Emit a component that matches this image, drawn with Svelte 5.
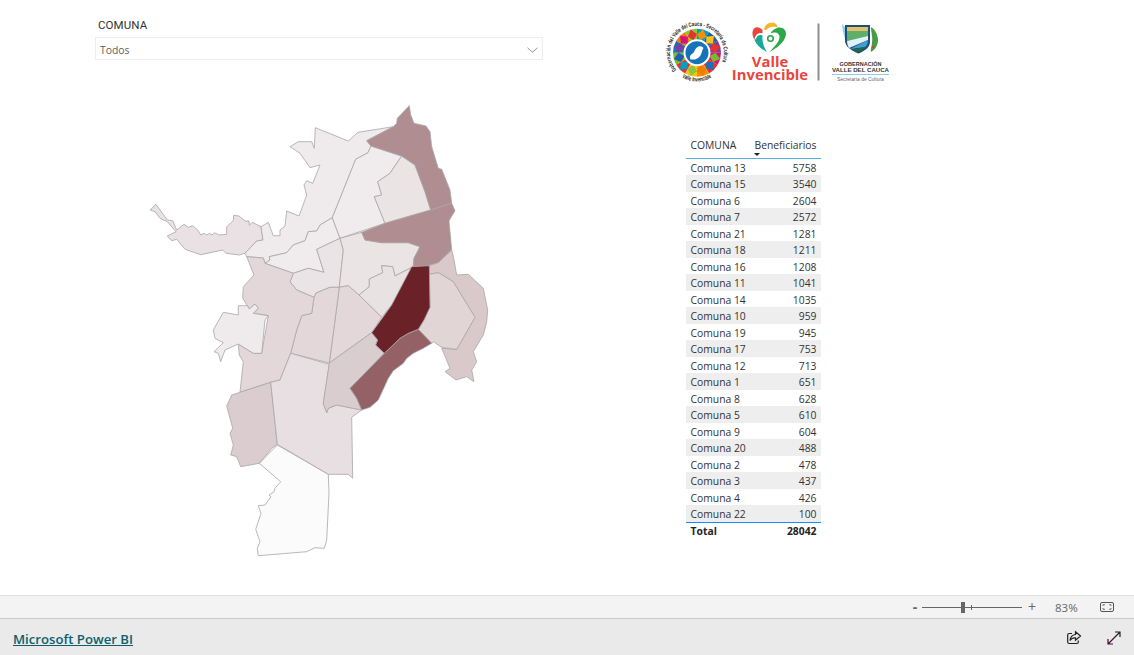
<script lang="ts">
    const rows = [
        ["Comuna 13", 5758], ["Comuna 15", 3540], ["Comuna 6", 2604], ["Comuna 7", 2572],
        ["Comuna 21", 1281], ["Comuna 18", 1211], ["Comuna 16", 1208], ["Comuna 11", 1041],
        ["Comuna 14", 1035], ["Comuna 10", 959], ["Comuna 19", 945], ["Comuna 17", 753],
        ["Comuna 12", 713], ["Comuna 1", 651], ["Comuna 8", 628], ["Comuna 5", 610],
        ["Comuna 9", 604], ["Comuna 20", 488], ["Comuna 2", 478], ["Comuna 3", 437],
        ["Comuna 4", 426], ["Comuna 22", 100],
    ];

    // map regions, traced in page pixels
    const regions = [
        { fill: "#fbfbfb", pts: "277.3,445 328.3,474.3 329,493.3 326.7,540 324.3,548.3 315,547.7 306.7,551.7 258.3,555.7 257.3,548.3 260,541.7 255.7,529.3 261,513.3 258.3,505.7 265,505 271,496.7 269,495 274,491.7 275,488.3 280.7,481.7 259.3,463.3" },
        { fill: "#e9e1e3", pts: "150,210 156,204.3 167.3,220 172.7,220.7 176.7,230 184,224.3 188.3,227.3 192.7,225.7 198.3,230.7 200.7,235 204,233.3 206.7,235 209.3,233.3 212,235 214.3,232.7 219.3,235 226.7,234.3 226.7,226.7 233.3,220.7 233.7,215.3 239,216 245,221 249,221 249.3,225.3 252.3,222.3 261,226.7 263,240 256.7,241 245,253.3 239.3,255 226,253.3 222.7,250 200.7,254.7 185,249.3 176.7,239.3 171.7,240.7 167.3,236 176,231.7 167.3,221.7 160,218.3 155,211.7" },
        { fill: "#efebec", pts: "290,146.7 298,141.7 311.7,141.7 314.3,148.3 315.3,127.7 348.3,141 358,132.3 393.3,126.7 366.7,140.7 371,146 368,152.7 355.7,159.3 332.3,217.7 320,225 316.7,231 308.3,231.7 305,240.7 293.3,245 286.7,252.7 269.3,256.7 270,260 265,263.3 263.3,258 246.7,256.7 245,253.3 256.7,241 263,240 261,226.7 268.3,222.3 273.3,235.7 280,235.7 280,230 285,226 286.7,211 299,216 306.7,195 304,185 306.7,180.7 312.7,183.3 320,165 310,167.7 300,153.3" },
        { fill: "#f0ebec", pts: "320,225 332.3,217.7 340,238.3 316.7,249.3 324,272.3 308.3,268.3 293.3,273.3 265,263.3 270,260 269.3,256.7 286.7,252.7 293.3,245 305,240.7 308.3,231.7 316.7,231" },
        { fill: "#f0ecee", pts: "371,146 401.7,156 390,173.3 377.7,181.7 381.7,195 374.3,196.7 385,223.3 340,238.3 332.3,217.7 355.7,159.3 368,152.7" },
        { fill: "#ebe4e5", pts: "401.7,156 415,165 425,191.7 430.7,210 385,223.3 374.3,196.7 381.7,195 377.7,181.7 390,173.3" },
        { fill: "#ebe4e6", pts: "340,238.3 343.3,250 339.3,287.3 330,287.3 316,293 314,297.3 296.7,290 290,281.7 293.3,273.3 308.3,268.3 324,272.3 316.7,249.3" },
        { fill: "#ebe4e5", pts: "340,238.3 361.7,232.3 365,240 381.7,242.7 408.3,242.7 420,246.7 414,258.3 413,266.7 395,276 392.7,266.7 381.7,265.7 382.7,272.7 369.3,279 369.3,286.7 359,295 348.3,285.7 339.3,287.3 343.3,250" },
        { fill: "#e9e2e3", pts: "413,266.7 395,276 392.7,266.7 381.7,265.7 382.7,272.7 369.3,279 369.3,286.7 359,295 381.7,317.3 391.7,305" },
        { fill: "#b08d91", pts: "366.7,140.7 393.3,126.7 396.7,123.3 397.3,118.3 409.3,105.7 410.7,115 414,123.3 426,126 430,131.7 431.7,146.7 438.3,168.3 441.7,169.3 450,190 451.7,203.3 430.7,210 425,191.7 415,165 401.7,156 371,146" },
        { fill: "#b08d91", pts: "361.7,232.3 385,223.3 430.7,210 451.7,203.3 455,210.7 449,220.7 451.7,250 438.3,262.7 423.3,266.7 413.3,266.7 414,258.3 420,246.7 408.3,242.7 381.7,242.7 365,240" },
        { fill: "#d9c9cb", pts: "429.3,265.7 438.3,262.7 451.7,250 454,260 456.7,275 468.3,274.3 483.3,288.3 487.7,310 486.7,322 483.3,335 473.3,351.7 476.7,361.7 471.7,370 474,381.7 466.7,376.7 456,380 445,371.7 450,368.3 441.7,348.3 456.7,349.3 475,317.3 453.3,281.7 438.3,272.7 429.3,274.3" },
        { fill: "#e2d5d6", pts: "429.3,274.3 438.3,272.7 453.3,281.7 475,317.3 456.7,349.3 441.7,347.3 433.3,341.7 431.7,343.3 418.3,329.3 424,320 430,307.3" },
        { fill: "#e3d7d9", pts: "339.3,287.3 348.3,285.7 359,295 381.7,317.3 371.7,332.7 329.3,363 335,320" },
        { fill: "#e3d7d9", pts: "339.3,287.3 335,320 329.3,363 290.7,353.3 296.7,330 301.7,315.7 311.7,313.3 314,297.3 316,293 330,287.3" },
        { fill: "#e3d7d9", pts: "246.7,256.7 263.3,258 265,263.3 293.3,273.3 290,281.7 296.7,290 314,297.3 311.7,313.3 301.7,315.7 296.7,330 290.7,353.3 280,380 270.7,382.3 240,392.3 243.3,361.7 239.3,355 238.3,344 253.3,353.3 261.7,353.3 268.3,315.7 253.3,313.3 258.3,308.3 255,304 249.3,309 247.3,305.7 242.7,298.3 243.3,286.7 254,275" },
        { fill: "#efebec", pts: "213.3,330 223.3,312.3 238.3,315 238.3,305.7 247.3,305.7 249.3,309 255,304 258.3,308.3 253.3,313.3 268.3,315.7 265,320 261.7,353.3 253.3,353.3 238.3,344 225,350 220.7,361.7 218.3,353.3 214,351.7 223.3,342.7 215,338.3" },
        { fill: "#dacccf", pts: "240,392.3 270.7,382.3 277.3,444.3 271.7,448.3 259.3,463.3 240.7,466.7 236.7,456.7 230.7,455 233.3,445 230,433.3 232.7,428.3 226.7,406 231.7,395" },
        { fill: "#e7dfe1", pts: "290.7,353.3 329.3,364.3 323.3,403.3 326.7,412.7 328.3,408.3 336.7,405 361.7,410 351.7,417.3 352.7,478.3 348.3,474.3 328.3,474.3 277.3,444.3 270.7,382.3 280,380" },
        { fill: "#dacdcf", pts: "371.7,332.7 377.7,340 375.7,345 384.3,353.3 350,388.3 356.7,398.3 361.7,410 336.7,405 328.3,408.3 326.7,412.7 323.3,403.3 329.3,363" },
        { fill: "#946166", pts: "418.3,329.3 431.7,343.3 423.3,348.3 413.3,353.3 406.7,358.3 403.3,363.3 393.3,370.7 388.3,378.3 378.3,400 370,407.3 361.7,410 356.7,398.3 350,388.3 384.3,353.3 400,338.3 408.3,333.3" },
        { fill: "#6a2127", pts: "411.7,266.7 429.3,265.7 430,307.3 424,320 418.3,329.3 408.3,333.3 400,338.3 384.3,353.3 375.7,345 377.7,340 371.7,332.7 391.7,305" },
    ];

    // rainbow mosaic of the round seal, colours run clockwise from 3 o'clock
    const colors = ["#d6127c", "#e8322d", "#f39200", "#ffc20e", "#e8322d", "#7ab929", "#1d70b8", "#ef7d00", "#8cc63f", "#00a0c6", "#1d5fae", "#7a3f98"];
    const xy = (r: number, a: number) => `${(r * Math.cos(a)).toFixed(2)} ${(r * Math.sin(a)).toFixed(2)}`;
    const step = (Math.PI * 2) / colors.length;
    const tiles = colors.map((c, i) => {
        const a = i * step;
        return {
            wedge: `M0 0L${xy(24, a)}A24 24 0 0 1 ${xy(24, a + step)}Z`,
            kite: `M${xy(13, a + step / 2)}L${xy(18.5, a)}L${xy(24, a + step / 2)}L${xy(18.5, a + step)}Z`,
            c,
            c2: colors[(i + 5) % colors.length],
        };
    });
</script>

<div class="page">
    <main class="report">
        <section class="left">
            <div class="slicer">
                <div class="slicer-title">COMUNA</div>
                <div class="slicer-box">
                    <span>Todos</span>
                    <svg width="11" height="6" viewBox="0 0 11 6"><path d="M.5.8l5 4.400 5-4.400" fill="none" stroke="#8a8a8a" stroke-width=".9" /></svg>
                </div>
            </div>
            <svg class="map" width="360" height="460" viewBox="140 100 360 460">
                {#each regions as r}
                    <polygon points={r.pts} fill={r.fill} stroke="#aaa6a7" stroke-width="0.8" stroke-linejoin="round" />
                {/each}
            </svg>
        </section>

        <section class="right">
            <svg class="logos" width="240" height="70" viewBox="660 18 240 70">
                <!-- round seal -->
                <g transform="translate(697 52.700)">
                    {#each tiles as t}
                        <path d={t.wedge} fill={t.c} />
                    {/each}
                    {#each tiles as t}
                        <path d={t.kite} fill={t.c2} />
                    {/each}
                    <circle r="13.500" fill="#fff" />
                    <circle r="11.500" fill="#1573b9" />
                    <path d="M-6.500 6.500c-1.500-3 .5-5 2.500-6 2-2 2-5 5-6.500 2.500-1 5 0 5.500 1.500-1 1-1.500 3-2 5-1 3-3 5-6 6-2 .5-4 .5-5 0z" fill="#fff" />
                    <path id="seal-top" d="M-20.600 17.300A26.900 26.900 0 1 1 20.600 17.300" fill="none" />
                    <path id="seal-bottom" d="M-15 24.500A28.700 28.700 0 0 0 15 24.500" fill="none" />
                    <text class="seal-text"><textPath href="#seal-top" textLength="112" lengthAdjust="spacingAndGlyphs">Gobernación del Valle del Cauca - Secretaría de Cultura</textPath></text>
                    <text class="seal-text"><textPath href="#seal-bottom" textLength="31" lengthAdjust="spacingAndGlyphs">Valle Invencible</textPath></text>
                </g>
                <!-- valle invencible -->
                <path d="M762.500 30C758 25 752 27 752.500 34c.2 2 .8 3.500 2 6 .5-5 3-7.500 8-7z" fill="#e8453c" />
                <path d="M754.500 40c2 5 7 9.500 12.500 12-3-4-5-10-4.500-16.500-3-1-5.500 0-6 2.500z" fill="#17a89a" />
                <path d="M764 29.500c.5-4 4-7 8-7 3.500 0 5.500 2.500 5.500 5-4-1.500-8.500-.5-11 2.500z" fill="#f7b52c" />
                <path d="M769.500 52c7-3.500 15.500-10 16.500-17.500.5-5-4-8-9-6.500-3 1-5.500 3-6.500 5.500 4-2 9-1 9 3.500 0 5.500-6 10-10 15z" fill="#2ba84a" />
                <circle cx="770.500" cy="38.500" r="2.800" fill="none" stroke="#2ba84a" stroke-width="1.600" />
                <text class="valle" x="770" y="66.500">Valle</text>
                <text class="valle" x="770" y="80">Invencible</text>
                <rect x="817.500" y="23.500" width="2" height="57" fill="#8d8f8e" />
                <!-- coat of arms -->
                <path d="M842 24c1 10 3 20 13 28l3 2-2-4c-7-6-10-14-11-23z" fill="#8fd0ea" />
                <path d="M845 25h25v17c0 5-5 9-11.500 11.500C851 50 845 47 845 40z" fill="#1e4f7a" />
                <path d="M847 27h21v4h-21z" fill="#e3c069" />
                <path d="M847 31h21v6l-21 4z" fill="#5fae6a" />
                <path d="M847 41l21-5v4l-19 8c-1-2-2-4-2-7z" fill="#dff2f8" />
                <path d="M850 49l18-9c0 3-1 5-3 7z" fill="#3f9fd0" />
                <path d="M852 50l13-3c-2 2-4 4-6.500 5-2.500-.5-5-1-6.500-2z" fill="#1f6b3f" />
                <path d="M871 27c4 2 7 8 7 13s-3 10-7 12c-1-3 1-6 1-9 1-5-1-11-1-16z" fill="#4a9a47" />
                <circle cx="873" cy="47" r="1" fill="#d33" />
                <text class="gob" x="860.500" y="65.500">GOBERNACIÓN</text>
                <text class="gob big" x="860.500" y="71.700">VALLE DEL CAUCA</text>
                <rect x="832" y="74" width="57" height="1" fill="#8cc8e8" />
                <text class="sec" x="860.500" y="80.500">Secretaría de Cultura</text>
            </svg>

            <div class="table">
                <div class="thead">
                    <span>COMUNA</span>
                    <span class="sorted">Beneficiarios<i class="arrow"></i></span>
                </div>
                {#each rows as [name, value]}
                    <div class="row">
                        <span>{name}</span>
                        <span>{value}</span>
                    </div>
                {/each}
                <div class="total">
                    <span>Total</span>
                    <span>28042</span>
                </div>
            </div>
        </section>
    </main>

    <div class="statusbar">
        <span class="zoom-btn minus">-</span>
        <span class="slider"><i class="mark"></i><i class="thumb"></i></span>
        <span class="zoom-btn plus">+</span>
        <span class="pct">83%</span>
        <svg class="fit" width="16" height="12" viewBox="0 0 16 12" fill="none" stroke="#555">
            <rect x="1.500" y="1.500" width="13" height="9" rx="1.500" />
            <path d="M4 5V3.700h2M12 5V3.700h-2M4 7v1.300h2M12 7v1.300h-2" stroke-width=".8" />
        </svg>
    </div>

    <footer class="footer">
        <a href="#top">Microsoft Power BI</a>
        <div class="actions">
            <svg width="16" height="16" viewBox="0 0 16 16" fill="none" stroke="#222" stroke-width="1.200">
                <path d="M6 3.500H3.200c-.9 0-1.500.6-1.500 1.500v7c0 .9.6 1.500 1.500 1.500h7.600c.9 0 1.500-.6 1.500-1.500v-1.500" />
                <path d="M9.500 1.800l5 4.200-5 4.200V7.900c-2.500-.2-4.300.6-5.500 2.600.3-3.200 2.200-5.600 5.500-6z" />
            </svg>
            <svg width="16" height="16" viewBox="0 0 16 16" fill="none" stroke-width="1.200">
                <path d="M8 8l6-6M9 2h5v5" stroke="#222" />
                <path d="M8 8l-6 6M2 9v5h5" stroke="#3d1038" />
            </svg>
        </div>
    </footer>
</div>

<style>
    :global(body) {
        margin: 0;
        background: #fff;
    }

    .page {
        display: flex;
        flex-direction: column;
        width: 1134px;
        height: 655px;
        overflow: hidden;
        font-family: "Open Sans", "Liberation Sans", sans-serif;
        color: #333;
    }

    .report {
        display: grid;
        grid-template-columns: 660px 1fr;
        height: 595px;
    }

    .slicer {
        width: 448px;
        margin-left: 95px;
        padding-top: 18px;
    }

    .slicer-title {
        padding-left: 3px;
        font-family: Roboto, sans-serif;
        font-size: 11.500px;
        line-height: 14px;
        letter-spacing: 0.1px;
        color: #333;
    }

    .slicer-box {
        display: flex;
        justify-content: space-between;
        align-items: center;
        box-sizing: border-box;
        height: 23px;
        margin-top: 5px;
        padding: 2px 4px 0 4px;
        border: 1px solid #eeeeee;
        font-size: 10.400px;
        color: #605e5c;
    }

    .map {
        display: block;
        margin: 40px 0 0 140px;
    }

    .logos {
        display: block;
        margin-top: 18px;
    }

    .seal-text {
        font-family: "Liberation Sans", sans-serif;
        font-size: 6px;
        font-weight: 700;
        fill: #222;
    }

    .valle {
        font-family: "Open Sans", sans-serif;
        font-size: 14.800px;
        font-weight: 700;
        text-anchor: middle;
        fill: #e8453c;
    }

    .gob {
        font-family: "Liberation Sans", sans-serif;
        font-size: 5.500px;
        font-weight: 700;
        text-anchor: middle;
        fill: #333;
    }

    .gob.big {
        font-size: 6.100px;
    }

    .sec {
        font-family: "Liberation Sans", sans-serif;
        font-size: 4.900px;
        text-anchor: middle;
        fill: #666;
    }

    .table {
        width: 135px;
        margin: 48px 0 0 26px;
        font-size: 10.350px;
    }

    .thead,
    .row,
    .total {
        display: flex;
        justify-content: space-between;
        padding: 0 4.500px;
        white-space: nowrap;
    }

    .thead {
        box-sizing: border-box;
        height: 22.500px;
        padding-top: 2px;
        line-height: 15px;
        border-bottom: 1px solid #53aeea;
    }

    .sorted {
        position: relative;
    }

    .arrow {
        position: absolute;
        left: 0;
        top: 14.500px;
        border-left: 3.500px solid transparent;
        border-right: 3.500px solid transparent;
        border-top: 3.500px solid #222;
    }

    .row {
        box-sizing: border-box;
        height: 16.500px;
        padding-top: 1px;
        line-height: 16.500px;
    }

    .row:nth-child(odd) {
        background: #eeeeee;
    }

    .total {
        height: 17px;
        line-height: 16px;
        border-top: 1.500px solid #118dff;
        font-weight: 700;
        color: #252423;
    }

    .statusbar {
        display: flex;
        align-items: center;
        box-sizing: border-box;
        height: 24px;
        padding-left: 912px;
        background: #f3f3f3;
        border-top: 1px solid #e1e1e1;
        border-bottom: 1px solid #c8c8c8;
        font-size: 14px;
        color: #666;
    }

    .zoom-btn {
        width: 10px;
        text-align: center;
        line-height: 14px;
    }

    .minus {
        font-weight: 700;
        width: 6px;
    }

    .slider {
        position: relative;
        width: 100px;
        height: 1px;
        margin: 0 5px 0 4px;
        background: #666;
    }

    .thumb {
        position: absolute;
        left: 39px;
        top: -5px;
        width: 4px;
        height: 11px;
        background: #666;
    }

    .mark {
        position: absolute;
        left: 49px;
        top: -2px;
        width: 1px;
        height: 5px;
        background: #666;
    }

    .pct {
        margin-left: 18px;
        font-size: 11.500px;
    }

    .fit {
        margin-left: 21px;
    }

    .footer {
        flex: 1;
        display: flex;
        align-items: center;
        justify-content: space-between;
        padding: 2px 12px 0 13px;
        background: #eaeaea;
    }

    .footer a {
        margin-top: 1px;
        font-size: 13.170px;
        font-weight: 600;
        color: #0d5f6c;
        text-decoration: underline;
    }

    .actions {
        display: flex;
        gap: 24px;
    }

    .actions svg {
        display: block;
    }
</style>
